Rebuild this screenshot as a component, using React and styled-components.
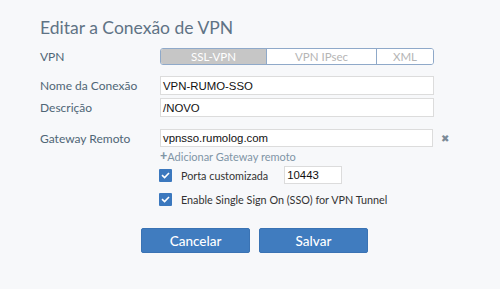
import React from "react";
import styled, { createGlobalStyle } from "styled-components";

const Global = createGlobalStyle`
  html, body { margin: 0; padding: 0; background: #f7f8fa; }
  body { font-family: Lato, "Open Sans", sans-serif; }
  * { box-sizing: border-box; }
`;

const Page = styled.div`
  width: 500px;
  height: 289px;
  padding: 17px 0 0 40px;
  background: #f7f8fa;
`;

const Title = styled.h1`
  margin: 0 0 9px 0;
  font-family: Lato, sans-serif;
  font-weight: 400;
  font-size: 17.5px;
  line-height: 22px;
  color: #5f7385;
`;

const Row = styled.div`
  display: grid;
  grid-template-columns: 120px 274px 20px;
  align-items: center;
  margin-top: ${(p) => p.$mt || 0}px;
  height: ${(p) => p.$h || 20}px;
`;

const Label = styled.div`
  font-size: 12px;
  color: #4f6676;
`;

const Segmented = styled.div`
  display: grid;
  grid-template-columns: 105px 110px 1fr;
  height: 17px;
  border: 1px solid #8fa9c9;
  border-radius: 3px;
  overflow: hidden;
  background: #fff;
`;

const Segment = styled.div`
  display: flex;
  align-items: center;
  justify-content: center;
  font-size: 11.5px;
  color: ${(p) => (p.$active ? "#fff" : "#b5b5b5")};
  background: ${(p) => (p.$active ? "#c6c6c6" : "#fff")};
  border-left: ${(p) => (p.$first ? "none" : "1px solid #8fa9c9")};
`;

const Input = styled.div`
  height: ${(p) => p.$h || 19}px;
  width: ${(p) => p.$w || "100%"};
  margin-left: ${(p) => p.$ml || 0}px;
  border: 1px solid #dcdcdc;
  background: #fff;
  display: flex;
  align-items: center;
  padding-left: 2px;
  font-family: "Liberation Sans", Arial, sans-serif;
  font-size: 11.4px;
  color: #111;
`;

const Remove = styled.span`
  font-size: 10px;
  color: #7b8a97;
  padding-left: 7px;
`;

const AddLink = styled.div`
  font-size: 11px;
  color: #7f95a6;
  display: flex;
  align-items: center;
`;

const Plus = styled.span`
  font-weight: 900;
  font-size: 12.5px;
  line-height: 1;
`;

const CheckLine = styled.div`
  display: flex;
  align-items: center;
  gap: 9px;
  font-size: 10.8px;
  color: #333;
`;

const Box = styled.span`
  width: 13px;
  height: 13px;
  background: #3b78be;
  border-radius: 1px;
  display: flex;
  align-items: center;
  justify-content: center;
  margin-left: -1px;
`;

const Buttons = styled.div`
  display: flex;
  gap: 9px;
  margin: 21px 0 0 101px;
`;

const Button = styled.button`
  width: 109px;
  height: 25px;
  border: 1px solid #3a73b4;
  border-radius: 2px;
  background: #407cbf;
  color: #fff;
  font-family: Lato, sans-serif;
  font-size: 13.5px;
  font-weight: 500;
  padding: 0;
`;

const Check = () => (
  <Box>
    <svg width="9" height="7" viewBox="0 0 9 7">
      <path d="M1 3.2 L3.6 5.6 L8 1" fill="none" stroke="#fff" strokeWidth="1.6" />
    </svg>
  </Box>
);

export default function App() {
  return (
    <Page>
      <Global />
      <Title>Editar a Conexão de VPN</Title>
      <Row $h={17}>
        <Label>VPN</Label>
        <Segmented>
          <Segment $active $first>SSL-VPN</Segment>
          <Segment>VPN IPsec</Segment>
          <Segment>XML</Segment>
        </Segmented>
      </Row>
      <Row $mt={11} $h={19}>
        <Label>Nome da Conexão</Label>
        <Input>VPN-RUMO-SSO</Input>
      </Row>
      <Row $mt={3} $h={19}>
        <Label>Descrição</Label>
        <Input>/NOVO</Input>
      </Row>
      <Row $mt={12} $h={18}>
        <Label>Gateway Remoto</Label>
        <Input $h={18} $w="273px">vpnsso.rumolog.com</Input>
        <Remove>✖</Remove>
      </Row>
      <Row $mt={1} $h={16}>
        <span />
        <AddLink>
          <Plus>+</Plus>Adicionar Gateway remoto
        </AddLink>
      </Row>
      <Row $mt={2} $h={18}>
        <span />
        <CheckLine>
          <Check />
          Porta customizada
          <Input $h={18} $w="58px" $ml={7}>10443</Input>
        </CheckLine>
      </Row>
      <Row $mt={7} $h={16}>
        <span />
        <CheckLine>
          <Check />
          Enable Single Sign On (SSO) for VPN Tunnel
        </CheckLine>
      </Row>
      <Buttons>
        <Button>Cancelar</Button>
        <Button>Salvar</Button>
      </Buttons>
    </Page>
  );
}
